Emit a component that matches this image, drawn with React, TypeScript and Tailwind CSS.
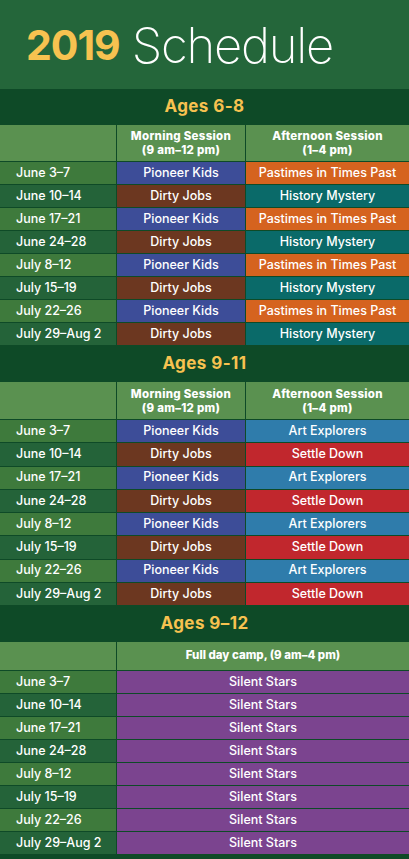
import React from 'react';

type Row = { date: string; am: string; pm?: string };

const colors: Record<string, string> = {
  'Pioneer Kids': 'bg-[#3d4d98]',
  'Dirty Jobs': 'bg-[#6c3720]',
  'Pastimes in Times Past': 'bg-[#d5631f]',
  'History Mystery': 'bg-[#0a6a69]',
  'Art Explorers': 'bg-[#2f7cab]',
  'Settle Down': 'bg-[#c1272d]',
  'Silent Stars': 'bg-[#7b448f]',
};

const dates = ['June 3–7', 'June 10–14', 'June 17–21', 'June 24–28', 'July 8–12', 'July 15–19', 'July 22–26', 'July 29–Aug 2'];

const young: Row[] = dates.map((d, i) => ({
  date: d,
  am: i % 2 === 0 ? 'Pioneer Kids' : 'Dirty Jobs',
  pm: i % 2 === 0 ? 'Pastimes in Times Past' : 'History Mystery',
}));

const middle: Row[] = dates.map((d, i) => ({
  date: d,
  am: i % 2 === 0 ? 'Pioneer Kids' : 'Dirty Jobs',
  pm: i % 2 === 0 ? 'Art Explorers' : 'Settle Down',
}));

const full: Row[] = dates.map((d) => ({ date: d, am: 'Silent Stars' }));

const font = { fontFamily: 'Inter, "Open Sans", "Liberation Sans", sans-serif' };

const Section: React.FC<{ title: string; rows: Row[]; fullDay?: boolean; tall?: boolean }> = ({ title, rows, fullDay, tall }) => (
  <div className="flex flex-col">
    <div className="h-9 bg-[#0e4a27] flex items-center justify-center text-[#f7c250] font-bold text-[17px] tracking-wide">
      {title}
    </div>
    <div className="bg-[#0e4a27] flex flex-col gap-px pb-px">
      {fullDay ? (
        <div className="h-[28px] flex gap-px">
          <div className="w-[116px] bg-[#5a9150]" />
          <div className="flex-1 bg-[#5a9150] flex items-center justify-center text-white font-extrabold text-[11.5px]">
            Full day camp, (9 am–4 pm)
          </div>
        </div>
      ) : (
        <div className={`${tall ? 'h-[37px]' : 'h-9'} flex gap-px`}>
          <div className="w-[116px] bg-[#5a9150]" />
          <div className="w-[128px] bg-[#5a9150] flex flex-col items-center justify-center text-white font-extrabold text-[11.5px] leading-[14px] tracking-wide">
            <span>Morning Session</span>
            <span>(9 am–12 pm)</span>
          </div>
          <div className="flex-1 bg-[#5a9150] flex flex-col items-center justify-center text-white font-extrabold text-[11.5px] leading-[14px] tracking-wide">
            <span>Afternoon Session</span>
            <span>(1–4 pm)</span>
          </div>
        </div>
      )}
      {rows.map((r, i) => (
        <div key={r.date} className={`${tall ? 'h-[22.25px]' : 'h-[22px]'} ${fullDay ? 'h-[22.3px]' : ''} flex gap-px text-white text-[12.5px] font-medium`}>
          <div className={`w-[116px] flex items-center pl-4 ${i % 2 === 0 ? 'bg-[#3e7a3c]' : 'bg-[#246339]'}`}>{r.date}</div>
          {fullDay ? (
            <div className={`flex-1 flex items-center justify-center ${colors[r.am]}`}>{r.am}</div>
          ) : (
            <>
              <div className={`w-[128px] flex items-center justify-center ${colors[r.am]}`}>{r.am}</div>
              <div className={`flex-1 flex items-center justify-center ${colors[r.pm!]}`}>{r.pm}</div>
            </>
          )}
        </div>
      ))}
    </div>
  </div>
);

const App: React.FC = () => {
  return (
    <div className="w-[409px] h-[859px] overflow-hidden bg-[#0e4a27]" style={font}>
      <div className="h-[89px] bg-[#24663a] flex items-center pl-[26px] pt-[3px]">
        <span className="text-[#f7c250] font-bold text-[41px] tracking-tight">2019</span>
        <span className="text-white font-extralight text-[49px] ml-[12px] tracking-tight">Schedule</span>
      </div>
      <Section title="Ages 6-8" rows={young} />
      <Section title="Ages 9-11" rows={middle} tall />
      <Section title="Ages 9–12" rows={full} fullDay />
    </div>
  );
};

export default App;
